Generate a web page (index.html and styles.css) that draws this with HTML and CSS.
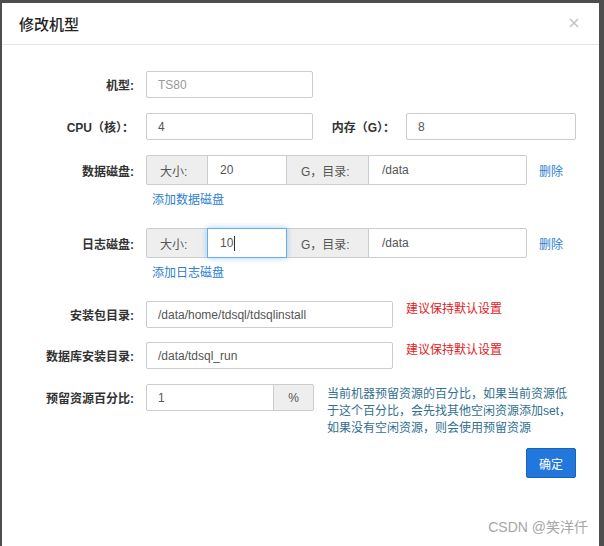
FILE: index.html
```html
<!DOCTYPE html>
<html lang="zh-CN">
<head>
<meta charset="utf-8">
<title>修改机型</title>
<link rel="stylesheet" href="styles.css">
</head>
<body>
<div class="modal">
  <div class="modal-header">
    <h4 class="modal-title">修改机型</h4>
    <button class="close" type="button" aria-label="关闭">
      <svg width="10" height="10" viewBox="0 0 10 10"><path d="M1 1 L9 9 M9 1 L1 9" stroke="#c4c4c4" stroke-width="1.6" fill="none"/></svg>
    </button>
  </div>
  <div class="modal-body">
    <div class="row row-model">
      <label class="lbl">机型:</label>
      <input class="fc w-short muted" value="TS80">
    </div>
    <div class="row row-cpu">
      <label class="lbl">CPU（核）：</label>
      <input class="fc w-short" value="4">
      <label class="lbl lbl-mem">内存（G）：</label>
      <input class="fc w-mem" value="8">
    </div>
    <div class="row row-disk">
      <label class="lbl">数据磁盘:</label>
      <div class="group">
        <span class="addon addon-size">大小:</span>
        <input class="fc g-size" value="20">
        <span class="addon addon-dir">G，目录:</span>
        <input class="fc g-dir" value="/data">
      </div>
      <a class="del" href="#">删除</a>
    </div>
    <div class="add-link"><a href="#">添加数据磁盘</a></div>
    <div class="row row-disk row-log">
      <label class="lbl">日志磁盘:</label>
      <div class="group">
        <span class="addon addon-size">大小:</span>
        <span class="fc g-size focused">10<span class="caret"></span></span>
        <span class="addon addon-dir">G，目录:</span>
        <input class="fc g-dir" value="/data">
      </div>
      <a class="del" href="#">删除</a>
    </div>
    <div class="add-link"><a href="#">添加日志磁盘</a></div>
    <div class="row row-pkg">
      <label class="lbl">安装包目录:</label>
      <input class="fc w-long" value="/data/home/tdsql/tdsqlinstall">
      <span class="tip-red">建议保持默认设置</span>
    </div>
    <div class="row row-db">
      <label class="lbl">数据库安装目录:</label>
      <input class="fc w-long" value="/data/tdsql_run">
      <span class="tip-red">建议保持默认设置</span>
    </div>
    <div class="row row-reserve">
      <label class="lbl">预留资源百分比:</label>
      <div class="group group-pct">
        <input class="fc p-input" value="1">
        <span class="addon addon-pct">%</span>
      </div>
      <p class="help">当前机器预留资源的百分比，如果当前资源低<br>于这个百分比，会先找其他空闲资源添加set，<br>如果没有空闲资源，则会使用预留资源</p>
    </div>
    <div class="footer">
      <button class="btn-primary" type="button">确定</button>
    </div>
  </div>
  <div class="watermark">CSDN @笑洋仟</div>
</div>
</body>
</html>
```

FILE: styles.css
```css
html, body {
  margin: 0;
  height: 100%;
  overflow: hidden;
}
body {
  background: #4e4e4e;
  padding: 3px 5px 0 2px;
  box-sizing: border-box;
  font-family: "Liberation Sans", "Noto Sans CJK SC", sans-serif;
  font-size: 12px;
  color: #333;
}
.modal {
  position: relative;
  background: #fff;
  height: 543px;
}
.modal-header {
  height: 41px;
  border-bottom: 1px solid #e5e5e5;
  display: flex;
  align-items: center;
  justify-content: space-between;
  padding: 0 20px 0 17px;
}
.modal-title {
  margin: 0;
  font-size: 15px;
  font-weight: 500;
  color: #222;
  font-family: "Noto Sans CJK SC", sans-serif;
}
.close {
  border: 0;
  background: none;
  padding: 0;
  width: 10px;
  height: 10px;
  display: flex;
  margin-top: -2px;
}
.modal-body {
  padding: 0 23px 0 0;
}
.row {
  display: flex;
  align-items: center;
}
.lbl {
  width: 144px;
  padding-right: 12px;
  box-sizing: border-box;
  text-align: right;
  font-weight: bold;
  color: #333;
  flex-shrink: 0;
}
.lbl-mem {
  width: 93px;
  padding-right: 11px;
}
.fc {
  box-sizing: border-box;
  height: 27px;
  border: 1px solid #ccc;
  border-radius: 2px;
  padding: 0 11px;
  font: inherit;
  color: #555;
  background: #fff;
  outline: none;
  display: flex;
  align-items: center;
}
.muted { color: #999; }
.w-short { width: 167px; }
.w-mem { width: 170px; }
.w-long { width: 247px; }
.row-model { margin-top: 26px; }
.row-cpu { margin-top: 15px; }
.row-disk { margin-top: 15px; }
.row-log { margin-top: 20px; }
.group {
  display: flex;
}
.row-disk .fc, .row-disk .addon {
  height: 30px;
}
.addon {
  box-sizing: border-box;
  height: 27px;
  display: flex;
  align-items: center;
  border: 1px solid #ccc;
  background: #eee;
  color: #555;
  padding-left: 13px;
}
.addon-size {
  width: 62px;
  border-radius: 2px 0 0 2px;
}
.g-size {
  width: 80px;
  margin-left: -1px;
  border-radius: 0;
  padding-left: 12px;
}
.addon-dir {
  width: 83px;
  margin-left: -1px;
  padding-left: 14px;
}
.g-dir {
  width: 159px;
  margin-left: -1px;
  border-radius: 0 2px 2px 0;
  padding-left: 13px;
}
.focused {
  position: relative;
  z-index: 1;
  border-color: #66afe9;
  box-shadow: 0 0 6px rgba(102, 175, 233, 0.6);
}
.caret {
  display: inline-block;
  width: 1px;
  height: 15px;
  background: #333;
  margin-left: 1px;
}
.del {
  margin-left: 12px;
  color: #2d7fd0;
  text-decoration: none;
}
.add-link {
  margin: 3px 0 0 150px;
  height: 20px;
  display: flex;
  align-items: center;
}
.add-link a {
  color: #2d7fd0;
  text-decoration: none;
}
.row-pkg { margin-top: 20px; }
.row-db { margin-top: 14px; }
.row-reserve {
  margin-top: 15px;
  align-items: flex-start;
}
.row-reserve .lbl {
  height: 27px;
  display: flex;
  align-items: center;
  justify-content: flex-end;
}
.tip-red {
  margin-left: 13px;
  color: #e3191e;
  margin-top: -14px;
}
.p-input {
  width: 128px;
  border-radius: 2px 0 0 2px;
}
.addon-pct {
  width: 41px;
  margin-left: -1px;
  padding: 0;
  justify-content: center;
  border-radius: 0 2px 2px 0;
}
.help {
  margin: 2px 0 0 13px;
  line-height: 17px;
  color: #31708f;
  white-space: nowrap;
}
.footer {
  display: flex;
  justify-content: flex-end;
  margin-top: 11px;
}
.btn-primary {
  width: 50px;
  height: 30px;
  border: 1px solid #1b63b9;
  border-radius: 2px;
  background: #2277dd;
  color: #fff;
  font: inherit;
  padding: 0;
}
.watermark {
  position: absolute;
  right: 11px;
  bottom: 10px;
  font-size: 14px;
  color: #a6a6a6;
}
```
